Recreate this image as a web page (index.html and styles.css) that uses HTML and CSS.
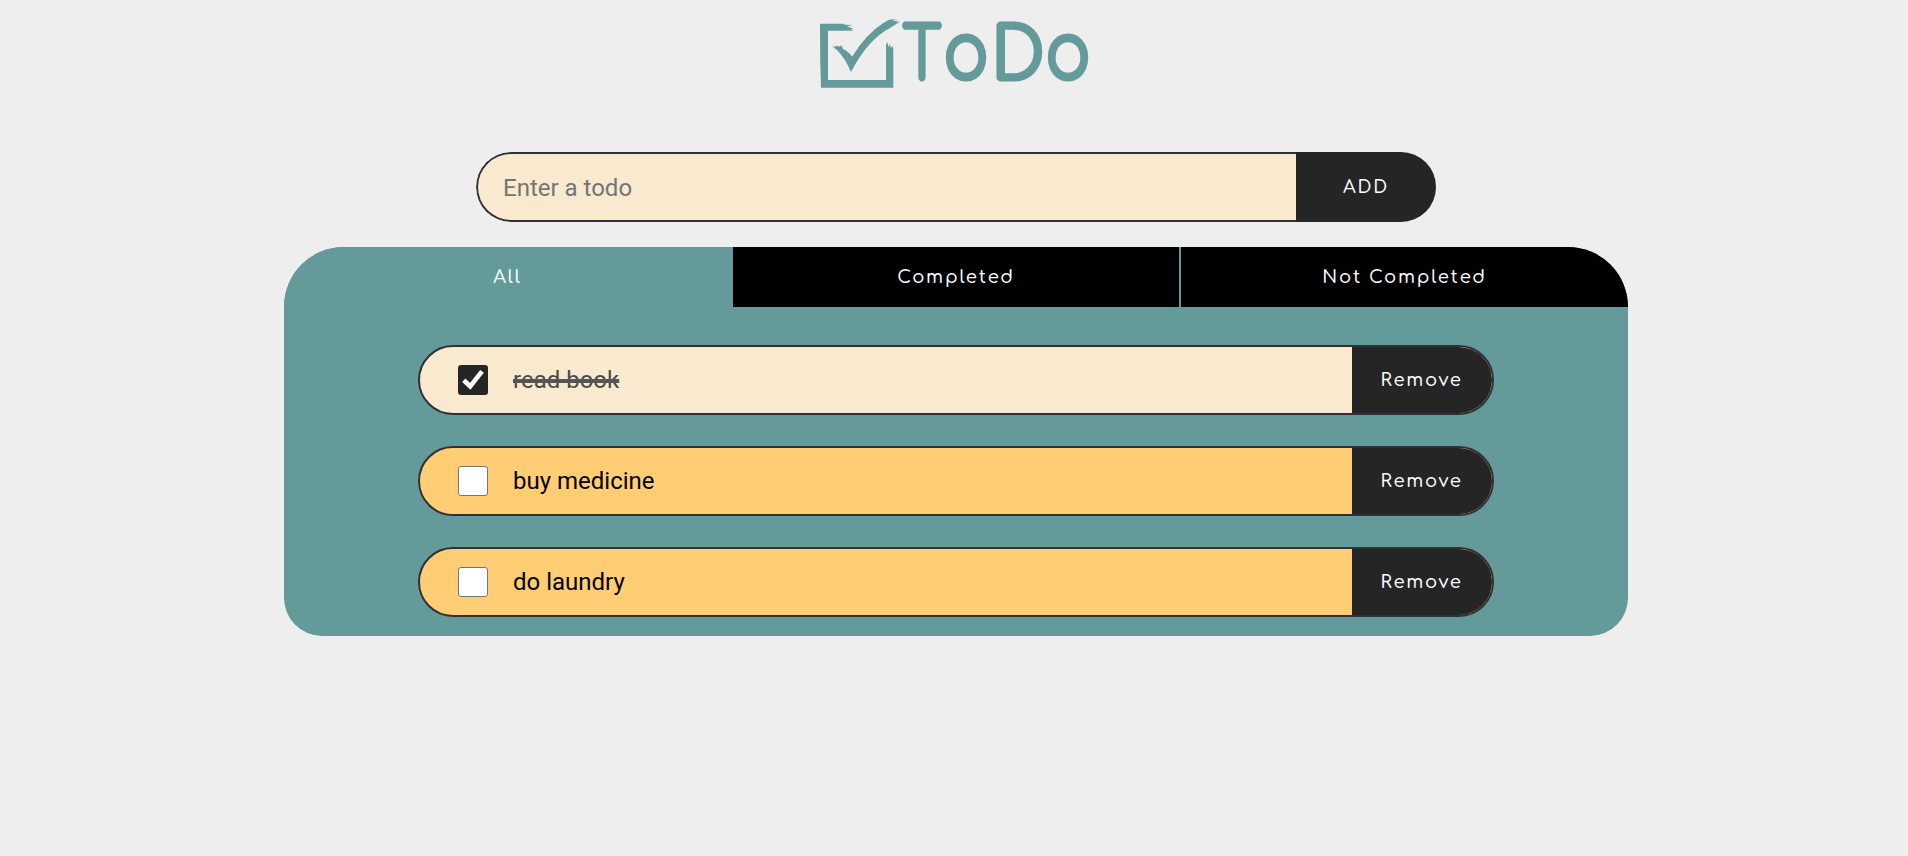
FILE: index.html
```html
<!DOCTYPE html>
<html lang="en">
<head>
<meta charset="utf-8">
<title>ToDo</title>
<link rel="stylesheet" href="styles.css">
</head>
<body>
<header class="header">
<svg class="logo" width="290" height="85" viewBox="0 0 290 85" role="img" aria-label="ToDo">
<path d="M10 13.8H33L35 14.8L42.5 15L37 16.5L43.8 18.4L40.5 19L43.5 20.8H18V70H76V35L77.4 32L78.5 37L80.2 34L80.8 38L82.6 36L83.3 39V77.8H11L10.2 50Z"/>
<path d="M22.5 36.5L27 36.8L25 35.5L30 36.5L31.5 35.3L33 39Q38 41 42.2 46.5Q56 24 74 12.5L79 9.8L85.5 9L82.5 11.2L88 10.3L85.5 12L90 11.5L81 17.5Q58 29 41 62Q35 48 27 40Z"/>
<text class="logo-text" y="69.8"><tspan class="logo-cap" x="92.5" textLength="39" lengthAdjust="spacingAndGlyphs">T</tspan><tspan class="logo-o" x="133" textLength="46" lengthAdjust="spacingAndGlyphs">o</tspan><tspan class="logo-cap" x="181" textLength="54" lengthAdjust="spacingAndGlyphs">D</tspan><tspan class="logo-o" x="235" textLength="46" lengthAdjust="spacingAndGlyphs">o</tspan></text>
</svg>
</header>
<main class="main">
<form class="form">
<input class="entry" type="text" placeholder="Enter a todo">
<button class="button add" type="button">ADD</button>
</form>
<section class="panel">
<nav class="tabs">
<button class="tab active">All</button>
<button class="tab middle">Completed</button>
<button class="tab last">Not Completed</button>
</nav>
<ul class="list">
<li class="item done"><span class="box checked"><svg width="30" height="30" viewBox="0 0 30 30"><path d="M5.8 15.3L12.2 21.3L24 6.3" fill="none" stroke="#fff" stroke-width="4.6"/></svg></span><span class="label">read book</span><button class="button remove">Remove</button></li>
<li class="item"><span class="box"></span><span class="label">buy medicine</span><button class="button remove">Remove</button></li>
<li class="item"><span class="box"></span><span class="label">do laundry</span><button class="button remove">Remove</button></li>
</ul>
</section>
</main>
</body>
</html>
```
FILE: styles.css
```css
* { box-sizing: border-box; }
body { margin: 0; background: #eee; font-family: Roboto, sans-serif; }
button { font-family: Comfortaa, Lato, sans-serif; border: 0; color: #fff; letter-spacing: 1.8px; font-weight: 500; font-size: 18px; padding: 0; }
.header { height: 152px; padding: 10px 0 0 810px; }
.logo { display: block; fill: #649b9a; overflow: visible; }
.logo-text { font-family: Comfortaa, Lato, sans-serif; stroke: #649b9a; stroke-width: 3.2px; stroke-linejoin: round; }
.logo-cap { font-size: 73px; }
.logo-o { font-size: 82px; }
.main { width: 1344px; margin-left: 284px; }
.form { display: flex; width: 960px; height: 70px; margin: 0 auto 25px; border-radius: 35px; overflow: hidden; }
.entry { flex: 1; border: 2px solid #303036; border-right: 0; border-radius: 35px 0 0 35px; background: #f9e9cf; padding: 2px 0 0 25px; font: 24px Roboto, sans-serif; }
.entry::placeholder { color: #757575; }
.button { width: 140px; background: #252525; }
.panel { height: 388.6px; background: #649b9a; border-radius: 60px 60px 38px 38px; overflow: hidden; }
.tabs { display: grid; grid-template-columns: repeat(3, 1fr); height: 60px; }
.tab { background: #000; }
.tab.active { background: #649b9a; border-right: 1px solid #649b9a; }
.tab.middle { border: solid #649b9a; border-width: 0 1px; }
.tab.last { border-left: 1px solid #649b9a; }
.list { list-style: none; margin: 38px auto 0; padding: 0; width: 80%; display: flex; flex-direction: column; gap: 31px; }
.item { display: flex; align-items: center; height: 70px; border: 2px solid #303036; border-radius: 35px; background: #ffcd74; padding-left: 38px; }
.item.done { background: #f9e9cf; }
.box { width: 30px; height: 30px; border: 1px solid #767676; border-radius: 3px; background: #fff; }
.box.checked { background: #252525; border: 0; }
.box svg { display: block; }
.label { flex: 1; margin-left: 24.6px; font-size: 24px; }
.done .label { color: #4b4b4a; text-decoration: line-through 4px #555; }
.remove { align-self: stretch; border-radius: 0 33px 33px 0; }
```
